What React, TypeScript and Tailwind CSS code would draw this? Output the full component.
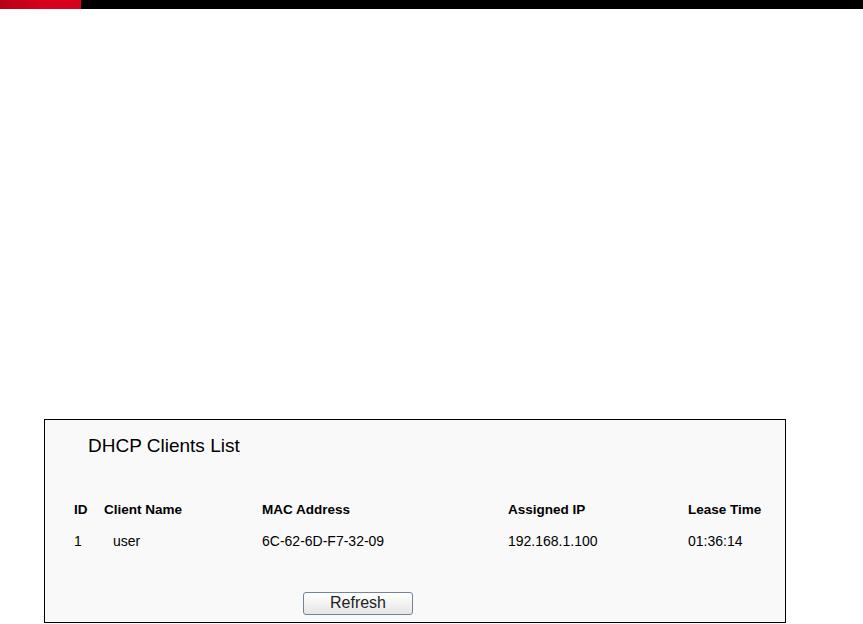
import React from "react";

const columns = [
  { label: "ID", key: "id", width: "w-[30px]" },
  { label: "Client Name", key: "name", width: "w-[158px]" },
  { label: "MAC Address", key: "mac", width: "w-[246px]" },
  { label: "Assigned IP", key: "ip", width: "w-[180px]" },
  { label: "Lease Time", key: "lease", width: "flex-1" },
];

const clients = [
  { id: "1", name: "user", mac: "6C-62-6D-F7-32-09", ip: "192.168.1.100", lease: "01:36:14" },
];

export default function App() {
  return (
    <div className="min-h-[624px] w-[863px] bg-white text-black" style={{ fontFamily: '"Liberation Sans", Arial, sans-serif' }}>
      {/* brand strip */}
      <div className="flex h-[9px]">
        <div className="w-[81px] bg-gradient-to-r from-[#b80018] via-[#d6001c] to-[#d6001c]" />
        <div className="flex-1 bg-black" />
      </div>

      {/* DHCP clients panel */}
      <div className="ml-[44px] mt-[410px] h-[204px] w-[742px] border border-black bg-[#f9f9f9]">
        <h1 className="pl-[43px] pt-[15px] text-[19px] font-normal leading-[22px]">DHCP Clients List</h1>

        <div className="mt-[45px] pl-[29px]">
          <div className="flex text-[13.5px] font-bold leading-4">
            {columns.map((c) => (
              <div key={c.key} className={c.width}>{c.label}</div>
            ))}
          </div>
          {clients.map((row) => (
            <div key={row.id} className="mt-[15px] flex text-[14px] leading-4">
              <div className="w-[30px]">{row.id}</div>
              <div className="w-[158px] pl-[9px]">{row.name}</div>
              <div className="w-[246px]">{row.mac}</div>
              <div className="w-[180px]">{row.ip}</div>
              <div className="flex-1">{row.lease}</div>
            </div>
          ))}
        </div>

        <div className="mt-[42px] pl-[258px]">
          <button
            type="button"
            className="h-[23px] w-[110px] rounded-[3px] border border-[#72839a] bg-gradient-to-b from-white to-[#e6e6e6] text-[16px] leading-none text-[#222]"
          >
            Refresh
          </button>
        </div>
      </div>
    </div>
  );
}
